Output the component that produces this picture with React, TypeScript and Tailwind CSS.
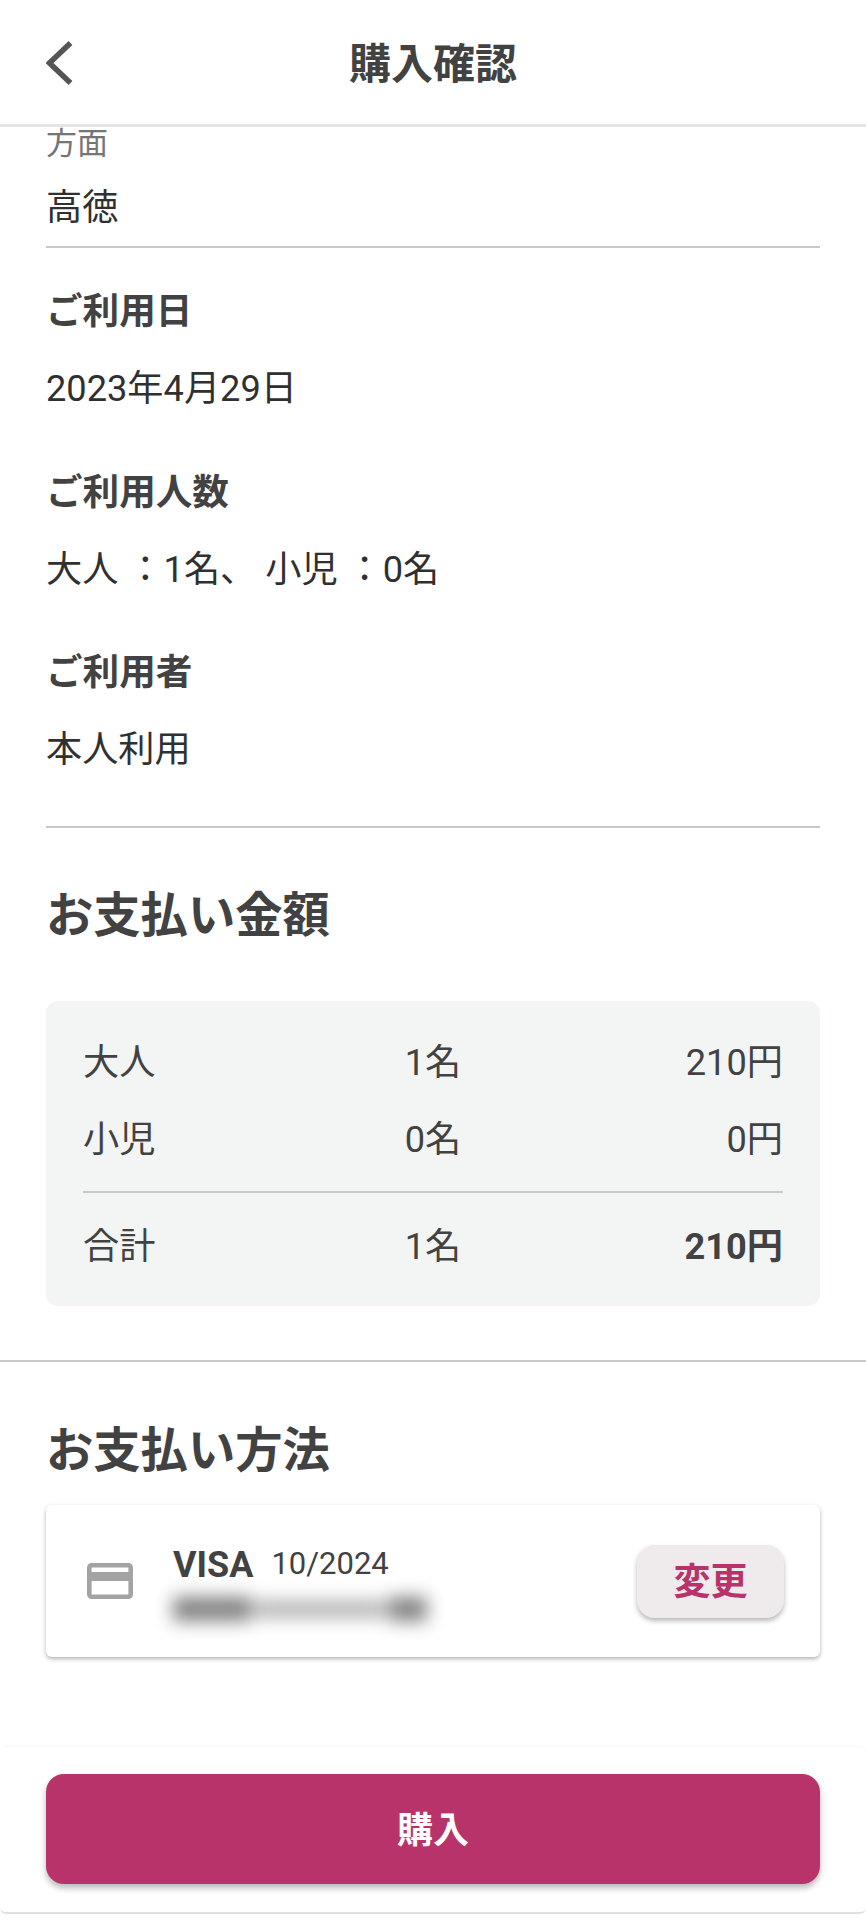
const jp = 'font-[Roboto,"Noto_Sans_CJK_JP",sans-serif]';

const details = [
  { label: 'ご利用日', value: '2023年4月29日' },
  { label: 'ご利用人数', value: '大人 ：1名、 小児 ：0名' },
  { label: 'ご利用者', value: '本人利用' },
];

const fares = [
  { name: '大人', count: '1名', price: '210円' },
  { name: '小児', count: '0名', price: '0円' },
];

function FareRow({ name, count, price, bold }: { name: string; count: string; price: string; bold?: boolean }) {
  return (
    <div className="grid h-[48px] grid-cols-3 items-center text-[36.2px] leading-[48px] text-[#424242]">
      <span>{name}</span>
      <span className="text-center">{count}</span>
      <span className={bold ? 'text-right font-bold' : 'text-right'}>{price}</span>
    </div>
  );
}

export default function App() {
  return (
    <div className={`${jp} flex h-[1920px] w-[866px] flex-col overflow-hidden bg-white`}>
      {/* Header */}
      <header className="relative flex h-[127px] shrink-0 items-center justify-center border-b-[3px] border-[#e1e5e5] pt-[5px]">
        <svg className="absolute left-[46px] top-[41px]" width="27" height="44" viewBox="0 0 27 44" fill="none">
          <path d="M24.5 2 L3.5 22 L24.5 42" stroke="#555555" strokeWidth="5.5" />
        </svg>
        <h1 className="text-[42px] font-bold leading-[56px] text-[#424242]">購入確認</h1>
      </header>

      <main className="flex flex-col">
        {/* Direction */}
        <div className="mx-[46px] border-b-2 border-[#c8c8c8] pb-[15px]">
          <p className="h-[32px] text-[31px] leading-[34px] text-[#757575]">方面</p>
          <p className="mt-[24px] h-[48px] text-[36.2px] leading-[49px] text-[#303030]">高徳</p>
        </div>

        {/* Usage details */}
        <div className="mx-[46px] flex flex-col gap-[55.5px] border-b-2 border-[#c8c8c8] pb-[52px] pt-[40px]">
          {details.map((d) => (
            <div key={d.label} className="flex flex-col gap-[29px]">
              <p className="h-[48px] text-[36.6px] font-bold leading-[47px] text-[#424242]">{d.label}</p>
              <p className="h-[48px] whitespace-pre text-[36.2px] leading-[47px] text-[#303030]">{d.value}</p>
            </div>
          ))}
        </div>

        {/* Payment amount */}
        <section className="border-b-2 border-[#c8c8c8] pb-[54px]">
          <h2 className="mx-[46px] mt-[55px] h-[64px] text-[47.3px] font-bold leading-[66px] text-[#424242]">お支払い金額</h2>
          <div className="mx-[46px] mt-[54px] h-[305px] rounded-[12px] bg-[#f3f5f5] px-[37px] pt-[38px]">
            <div className="flex flex-col gap-[29px]">
              {fares.map((f) => (
                <FareRow key={f.name} name={f.name} count={f.count} price={f.price} />
              ))}
            </div>
            <div className="mb-[30px] mt-[27px] h-[2px] bg-[#c8c8c8]" />
            <FareRow name="合計" count="1名" price="210円" bold />
          </div>
        </section>

        {/* Payment method */}
        <section>
          <h2 className="mx-[46px] mt-[56px] h-[64px] text-[47.3px] font-bold leading-[66px] text-[#424242]">お支払い方法</h2>
          <div className="mx-[46px] mt-[23px] flex h-[152px] items-center rounded-[6px] bg-white pl-[41px] pr-[36px] shadow-[0_2px_4px_rgba(0,0,0,0.3)]">
            <svg width="46" height="36" viewBox="2 4 20 16" preserveAspectRatio="none" className="shrink-0">
              <path
                fill="#a3a3a3"
                d="M20 4H4c-1.11 0-1.99.89-1.99 2L2 18c0 1.11.89 2 2 2h16c1.11 0 2-.89 2-2V6c0-1.11-.89-2-2-2zm0 14H4v-6h16v6zm0-10H4V6h16v2z"
              />
            </svg>
            <div className="ml-[40px] flex flex-col">
              <div className="flex h-[44px] items-center gap-[18px] text-[#424242]">
                <span className="text-[36px] font-bold">VISA</span>
                <span className="text-[31px]">10/2024</span>
              </div>
              <div className="mt-[11px] flex h-[22px] items-center gap-[3px] blur-[9px]">
                <div className="h-[24px] w-[78px] bg-[#808080]" />
                <div className="h-[16px] w-[132px] bg-[#acacac]" />
                <div className="h-[24px] w-[38px] bg-[#808080]" />
              </div>
            </div>
            <button className="ml-auto h-[73px] w-[147px] rounded-[18px] bg-[#efebed] pt-[3px] text-[37px] font-bold text-[#b8336a] shadow-[0_3px_5px_rgba(0,0,0,0.28)]">
              変更
            </button>
          </div>
        </section>
      </main>

      {/* Footer */}
      <footer className="mt-[90px] h-[167px] rounded-[6px] border-b-2 border-[#e0e0e0] bg-white px-[46px] pt-[27px] shadow-[0_-1px_2px_rgba(0,0,0,0.04)]">
        <button className="h-[110px] w-full rounded-[18px] bg-[#b8336a] pt-[3px] text-[36px] font-bold text-white shadow-[0_4px_6px_rgba(0,0,0,0.28)]">
          購入
        </button>
      </footer>
    </div>
  );
}
